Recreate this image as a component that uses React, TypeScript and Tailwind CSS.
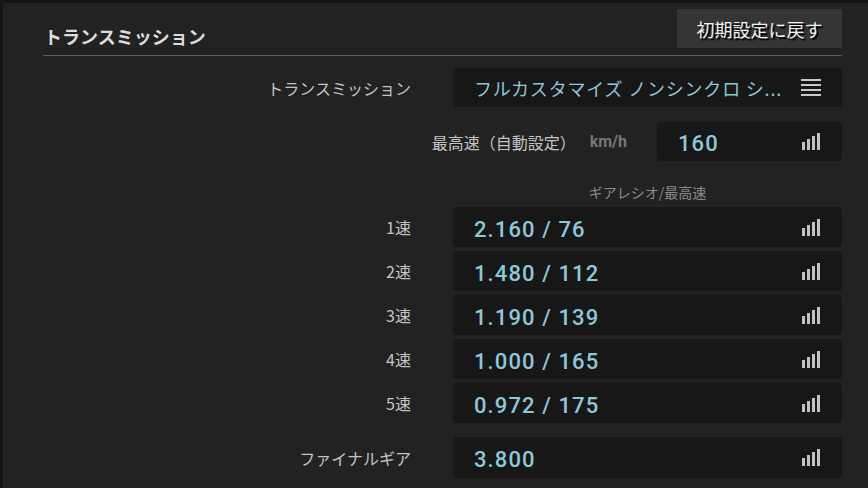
import React from "react"

const jp = { fontFamily: '"Noto Sans CJK JP", "Noto Sans", sans-serif' }
const num = { fontFamily: 'Roboto, "Liberation Sans", "Noto Sans CJK JP", sans-serif' }

function SignalIcon() {
  return (
    <svg width="18" height="17" viewBox="0 0 18 17" className="shrink-0">
      <rect x="0" y="9" width="3" height="8" fill="#c2c2c2" />
      <rect x="5" y="6" width="3" height="11" fill="#c2c2c2" />
      <rect x="10" y="3" width="3" height="14" fill="#c2c2c2" />
      <rect x="15" y="0" width="3" height="17" fill="#c2c2c2" />
    </svg>
  )
}

function ListIcon() {
  return (
    <svg width="20" height="17" viewBox="0 0 20 17" className="shrink-0">
      <rect x="0" y="0" width="20" height="2" fill="#c8c8c8" />
      <rect x="0" y="5" width="20" height="2" fill="#c8c8c8" />
      <rect x="0" y="10" width="20" height="2" fill="#c8c8c8" />
      <rect x="0" y="15" width="20" height="2" fill="#c8c8c8" />
    </svg>
  )
}

function Label({ children }: { children: React.ReactNode }) {
  return (
    <div className="w-[369px] pr-[1px] text-right text-[16px] leading-[22px] text-[#c4c4c4]" style={jp}>
      {children}
    </div>
  )
}

function ValueBox({ value, h = "h-[40px]" }: { value: string; h?: string }) {
  return (
    <div className={`ml-[41px] flex ${h} flex-1 items-center justify-between rounded-[4px] bg-[#171717] pl-[21px] pr-[22px]`}>
      <span className="pt-[5px] text-[22px] font-medium leading-[26px] tracking-[1.1px] text-[#8ec7da]" style={num}>
        {value}
      </span>
      <SignalIcon />
    </div>
  )
}

const gears = [
  { label: "1速", value: "2.160 / 76" },
  { label: "2速", value: "1.480 / 112" },
  { label: "3速", value: "1.190 / 139" },
  { label: "4速", value: "1.000 / 165" },
  { label: "5速", value: "0.972 / 175" },
]

export default function App() {
  return (
    <div className="h-[488px] w-[868px] overflow-hidden bg-[#151515] pl-[3px] pt-[3px]">
      <div className="flex h-full flex-col bg-[#222222] pl-[40px] pr-[26px]">
        {/* Header */}
        <div className="flex h-[53px] items-end justify-between border-b border-[#5c5c5c]">
          <h1 className="mb-[7px] ml-[1px] text-[18px] font-semibold leading-[24px] text-[#dcdcdc]" style={jp}>
            トランスミッション
          </h1>
          <button
            className="mb-[7px] h-[39px] w-[165px] bg-[#353535] text-[18px] leading-[24px] text-[#f0f0f0] [text-shadow:2px_2px_1px_#000]"
            style={jp}
          >
            初期設定に戻す
          </button>
        </div>

        {/* Transmission type */}
        <div className="mt-[12px] flex items-center">
          <Label>トランスミッション</Label>
          <div className="ml-[41px] flex h-[39px] flex-1 items-center justify-between rounded-[4px] bg-[#171717] pl-[21px] pr-[21px]">
            <span className="text-[18px] leading-[24px] tracking-[0.8px] text-[#8ec7da]" style={jp}>
              フルカスタマイズ ノンシンクロ シ...
            </span>
            <ListIcon />
          </div>
        </div>

        {/* Top speed */}
        <div className="mt-[15px] flex items-center justify-end">
          <span className="text-[16px] leading-[22px] text-[#c4c4c4]" style={jp}>
            最高速（自動設定）
          </span>
          <span className="ml-[14px] text-[16px] font-bold leading-[22px] text-[#767676]" style={num}>
            km/h
          </span>
          <div className="ml-[30px] flex h-[39px] w-[185px] items-center justify-between rounded-[4px] bg-[#171717] pl-[21px] pr-[22px]">
            <span className="pt-[5px] text-[22px] font-medium leading-[26px] tracking-[1.1px] text-[#8ec7da]" style={num}>
              160
            </span>
            <SignalIcon />
          </div>
        </div>

        {/* Sub header */}
        <div className="mt-[21px] flex">
          <div className="w-[369px]" />
          <div className="ml-[41px] flex-1 text-center text-[14px] leading-[20px] text-[#8a8a8a]" style={jp}>
            ギアレシオ/最高速
          </div>
        </div>

        {/* Gears */}
        <div className="mt-[5px] flex flex-col gap-[4px]">
          {gears.map((g) => (
            <div key={g.label} className="flex items-center">
              <Label>{g.label}</Label>
              <ValueBox value={g.value} />
            </div>
          ))}
        </div>

        {/* Final gear */}
        <div className="mt-[14px] flex items-center">
          <Label>ファイナルギア</Label>
          <ValueBox value="3.800" h="h-[41px]" />
        </div>
      </div>
    </div>
  )
}
